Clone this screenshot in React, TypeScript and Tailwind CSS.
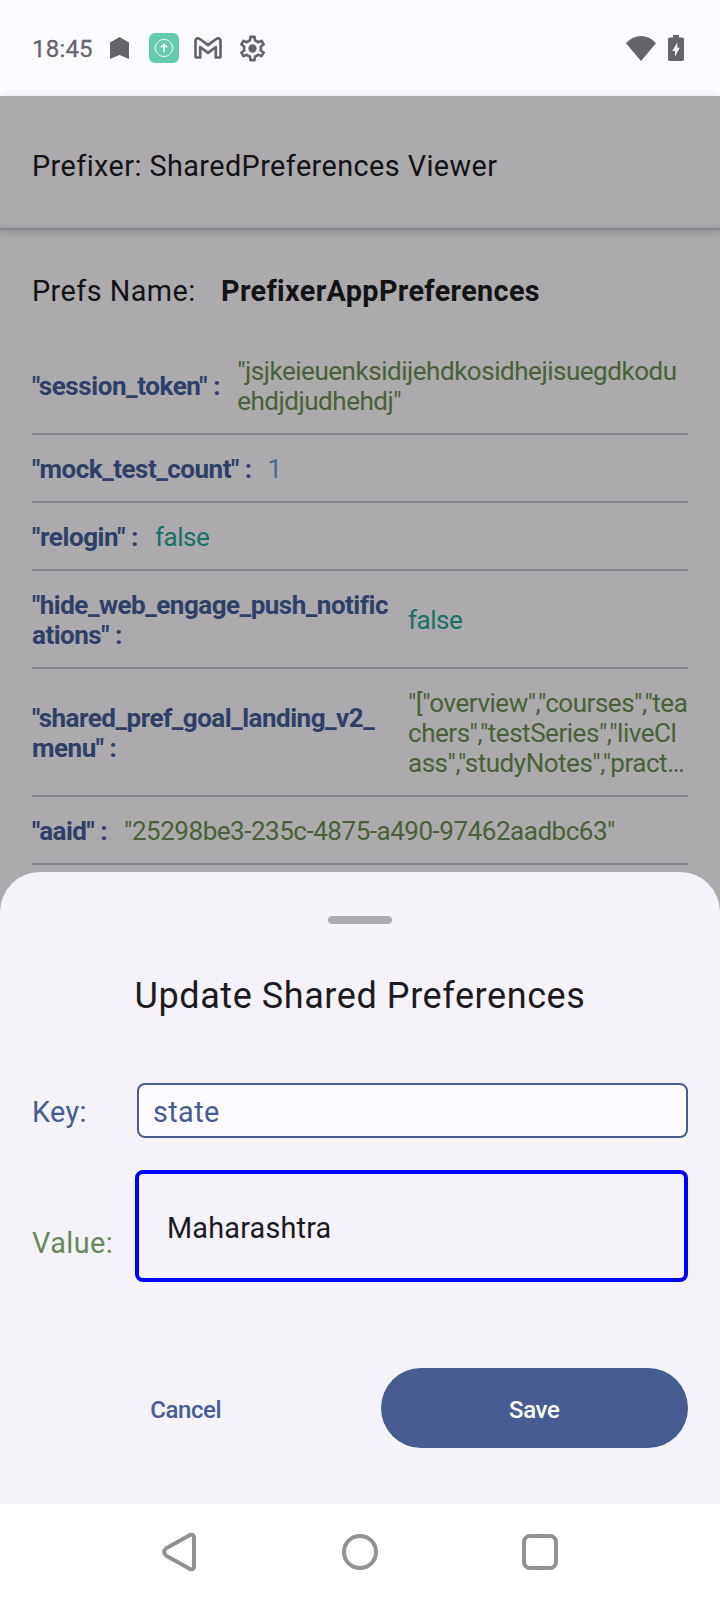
import React from "react";

type Entry = { name: string; value: string; tone: string; keyBox: string; lines: string };

const entries: Entry[] = [
  { name: '"session_token" :', value: '"jsjkeieuenksidijehdkosidhejisuegdkodu\nehdjdjudhehdj"', tone: "text-[#486138]", keyBox: "mr-[17px] tracking-[-0.42px]", lines: "h-[98px]" },
  { name: '"mock_test_count" :', value: "1", tone: "text-[#476c91]", keyBox: "mr-4 tracking-[-0.5px]", lines: "h-[68px]" },
  { name: '"relogin" :', value: "false", tone: "text-[#1a7066]", keyBox: "mr-[17px] tracking-[-0.4px]", lines: "h-[68px]" },
  { name: '"hide_web_engage_push_notific\nations" :', value: "false", tone: "text-[#1a7066]", keyBox: "w-[376px] tracking-[-0.5px]", lines: "h-[98px]" },
  { name: '"shared_pref_goal_landing_v2_\nmenu" :', value: '"["overview","courses","tea\nchers","testSeries","liveCl\nass","studyNotes","pract…', tone: "text-[#486138]", keyBox: "w-[376px] tracking-[-0.5px]", lines: "h-[128px]" },
  { name: '"aaid" :', value: '"25298be3-235c-4875-a490-97462aadbc63"', tone: "text-[#486138]", keyBox: "mr-[17px] tracking-[-0.5px]", lines: "h-[68px]" },
];

function StatusBar() {
  return (
    <header className="flex h-24 shrink-0 items-center bg-[#fdfbff] pl-8 pr-9 text-[#66646a]">
      <span className="w-[78px] pt-0.5 text-[24px] leading-8 tracking-[0.2px] [-webkit-text-stroke:0.3px_#66646a]">18:45</span>
      <svg className="h-[22px] w-[19px]" viewBox="0 0 19 22" fill="currentColor">
        <path d="M0 5.500 9.500 0 19 5.500V22L9.500 18 0 22Z" />
      </svg>
      <svg className="ml-5 h-[30px] w-[30px]" viewBox="0 0 30 30" fill="none">
        <rect width="30" height="30" rx="6" fill="#64ccac" />
        <circle cx="15" cy="15" r="8.600" stroke="#fff" strokeWidth="1" />
        <path d="M15 19v-7M11.800 14.500 15 11.300l3.200 3.200" stroke="#fff" strokeWidth="1.600" />
      </svg>
      <svg className="ml-[15px] h-[22px] w-7" viewBox="0 0 28 22" fill="none" stroke="currentColor" strokeWidth="2.700" strokeLinejoin="round">
        <path d="M1.500 19.300V3.900c0-2.400 2.600-3.200 4.300-1.900L14 8.200 22.200 2c1.700-1.300 4.300-.5 4.300 1.900v15.400q0 1.200-1.200 1.200h-3.500V10L14 15.900 6.200 10v10.500H2.700q-1.200 0-1.200-1.200Z" />
      </svg>
      <svg className="ml-[15px] h-[31px] w-[31px]" viewBox="0 0 24 24" fill="currentColor">
        <path d="M19.430 12.980c.04-.32.07-.64.07-.98 0-.34-.03-.66-.07-.98l2.110-1.650c.19-.15.24-.42.12-.64l-2-3.460c-.09-.16-.26-.25-.44-.25-.06 0-.12.010-.17.030l-2.490 1c-.52-.4-1.080-.73-1.690-.98l-.38-2.650C14.460 2.180 14.250 2 14 2h-4c-.25 0-.46.180-.49.420l-.38 2.650c-.61.250-1.170.590-1.690.980l-2.490-1c-.06-.02-.12-.03-.18-.03-.17 0-.34.090-.43.250l-2 3.460c-.13.220-.07.490.12.640l2.110 1.650c-.04.320-.07.650-.07.980 0 .330.030.660.070.980l-2.110 1.650c-.19.150-.24.420-.12.640l2 3.460c.09.160.26.250.44.250.06 0 .12-.01.170-.03l2.490-1c.52.400 1.080.730 1.690.980l.38 2.650c.03.240.240.420.490.420h4c.25 0 .46-.18.490-.42l.38-2.650c.61-.25 1.170-.59 1.690-.98l2.490 1c.06.020.120.030.180.030.17 0 .34-.09.430-.25l2-3.460c.12-.22.070-.49-.12-.64l-2.110-1.650Zm-1.980-1.710c.04.310.050.520.050.730 0 .210-.02.430-.05.730l-.14 1.130.89.700 1.080.840-.7 1.210-1.270-.51-1.040-.42-.9.680c-.43.320-.84.560-1.250.730l-1.060.430-.16 1.130-.2 1.350h-1.400l-.19-1.350-.16-1.130-1.060-.43c-.43-.18-.83-.41-1.230-.71l-.91-.7-1.060.430-1.270.510-.7-1.210 1.080-.84.890-.7-.14-1.130c-.03-.31-.05-.54-.05-.74s.02-.43.050-.73l.14-1.130-.89-.7-1.080-.84.700-1.210 1.270.510 1.040.420.900-.68c.43-.32.840-.56 1.250-.73l1.060-.43.160-1.130.200-1.350h1.390l.19 1.350.16 1.130 1.060.430c.43.180.830.410 1.230.710l.91.700 1.060-.43 1.270-.51.700 1.210-1.070.850-.89.700.14 1.130Z" />
        <circle cx="12" cy="12" r="3.200" />
      </svg>
      <svg className="ml-auto h-[25px] w-[30px]" viewBox="0 0 30 25" fill="currentColor">
        <path d="M15 25 0 7.200Q6.500 0 15 0t15 7.200Z" />
      </svg>
      <svg className="ml-3 h-[26px] w-4" viewBox="0 0 16 26" fill="currentColor">
        <path fillRule="evenodd" d="M5 0h6v2.600h3.300Q16 2.600 16 4.300v20q0 1.700-1.700 1.700H1.700Q0 26 0 24.300v-20Q0 2.600 1.700 2.600H5ZM9.300 7.500 4.300 16h2.800v5.500l4.600-8.700H9.300Z" />
      </svg>
    </header>
  );
}

function EntryRow({ entry }: { entry: Entry }) {
  return (
    <li className={`flex shrink-0 items-center border-b-2 border-[#87868f] pt-0.5 text-[26px] leading-[30px] whitespace-pre ${entry.lines}`}>
      <span className={`font-bold text-[#2f3f68] ${entry.keyBox}`}>{entry.name}</span>
      <span className={`tracking-[-0.47px] ${entry.tone}`}>{entry.value}</span>
    </li>
  );
}

export default function App() {
  return (
    <div className="flex h-[1600px] w-[720px] flex-col overflow-hidden bg-white font-['Roboto',sans-serif]">
      <StatusBar />
      <main className="relative h-[1408px] shrink-0 bg-[#acaaad] text-[#131316]">
        <div className="flex h-[134px] items-center border-b-2 border-[#87868f] bg-linear-to-t from-[#a19fa3] to-[#acaaad] to-[6px] px-8 pt-2 shadow-[0_2px_8px_rgba(0,0,0,0.18)]">
          <h1 className="text-[28.8px] leading-9 tracking-[0.43px]">Prefixer: SharedPreferences Viewer</h1>
        </div>
        <section className="px-8">
          <div className="flex h-[107px] items-center pt-[15px] text-[28.8px] leading-9">
            <span className="w-[189px] tracking-[0.45px]">Prefs Name:</span>
            <span className="font-bold tracking-[0.35px]">PrefixerAppPreferences</span>
          </div>
          <ul className="flex flex-col">
            {entries.map((entry) => (
              <EntryRow key={entry.name} entry={entry} />
            ))}
          </ul>
        </section>
        <section className="absolute inset-x-0 bottom-0 flex h-[632px] flex-col rounded-t-[40px] bg-[#f5f2fa] px-8 pt-11">
          <div className="h-2 w-16 shrink-0 self-center rounded bg-[#acadb3]" />
          <h2 className="mt-[49px] text-center text-[36px] leading-[46px] tracking-[0.58px] text-[#1b1b1f]">Update Shared Preferences</h2>
          <div className="mt-16 flex h-[55px] items-center text-[28.8px] leading-9 tracking-[0.4px] text-[#475d92]">
            <span className="w-[105px] pt-0.5">Key:</span>
            <div className="flex h-full flex-1 items-center rounded-lg border-2 border-[#475d92] bg-[#fdfbff] pl-3.5 pt-0.5">state</div>
          </div>
          <div className="mt-8 flex h-28 text-[28.8px] leading-9">
            <span className="w-[103px] pt-[55px] tracking-[0.45px] text-[#68895a]">Value:</span>
            <div className="flex flex-1 items-center rounded-lg border-4 border-[#0000ff] pl-7 pt-1 tracking-[0.2px] text-[#1b1b1f]">Maharashtra</div>
          </div>
          <div className="mt-[86px] flex h-20 gap-10 text-[24px] font-medium tracking-[-0.4px]">
            <button className="flex-1 pt-1 pr-px text-[#475d92]">Cancel</button>
            <button className="flex-1 rounded-full bg-[#475d92] pt-1 text-white">Save</button>
          </div>
        </section>
      </main>
      <nav className="flex h-24 items-center justify-center gap-[140px] bg-white">
        <svg className="h-10 w-10" viewBox="0 0 40 40" fill="none" stroke="#929292" strokeWidth="4" strokeLinejoin="round">
          <path d="M30.500 2.800 5.800 16.600Q2.500 20 5.800 23.400L30.500 37.200Q34 38 34 34V6Q34 2 30.500 2.800Z" />
        </svg>
        <svg className="h-10 w-10" viewBox="0 0 40 40" fill="none" stroke="#929292" strokeWidth="4">
          <circle cx="20" cy="20" r="16" />
        </svg>
        <svg className="h-10 w-10" viewBox="0 0 40 40" fill="none" stroke="#929292" strokeWidth="4">
          <rect x="4" y="4" width="32" height="32" rx="6" />
        </svg>
      </nav>
    </div>
  );
}
